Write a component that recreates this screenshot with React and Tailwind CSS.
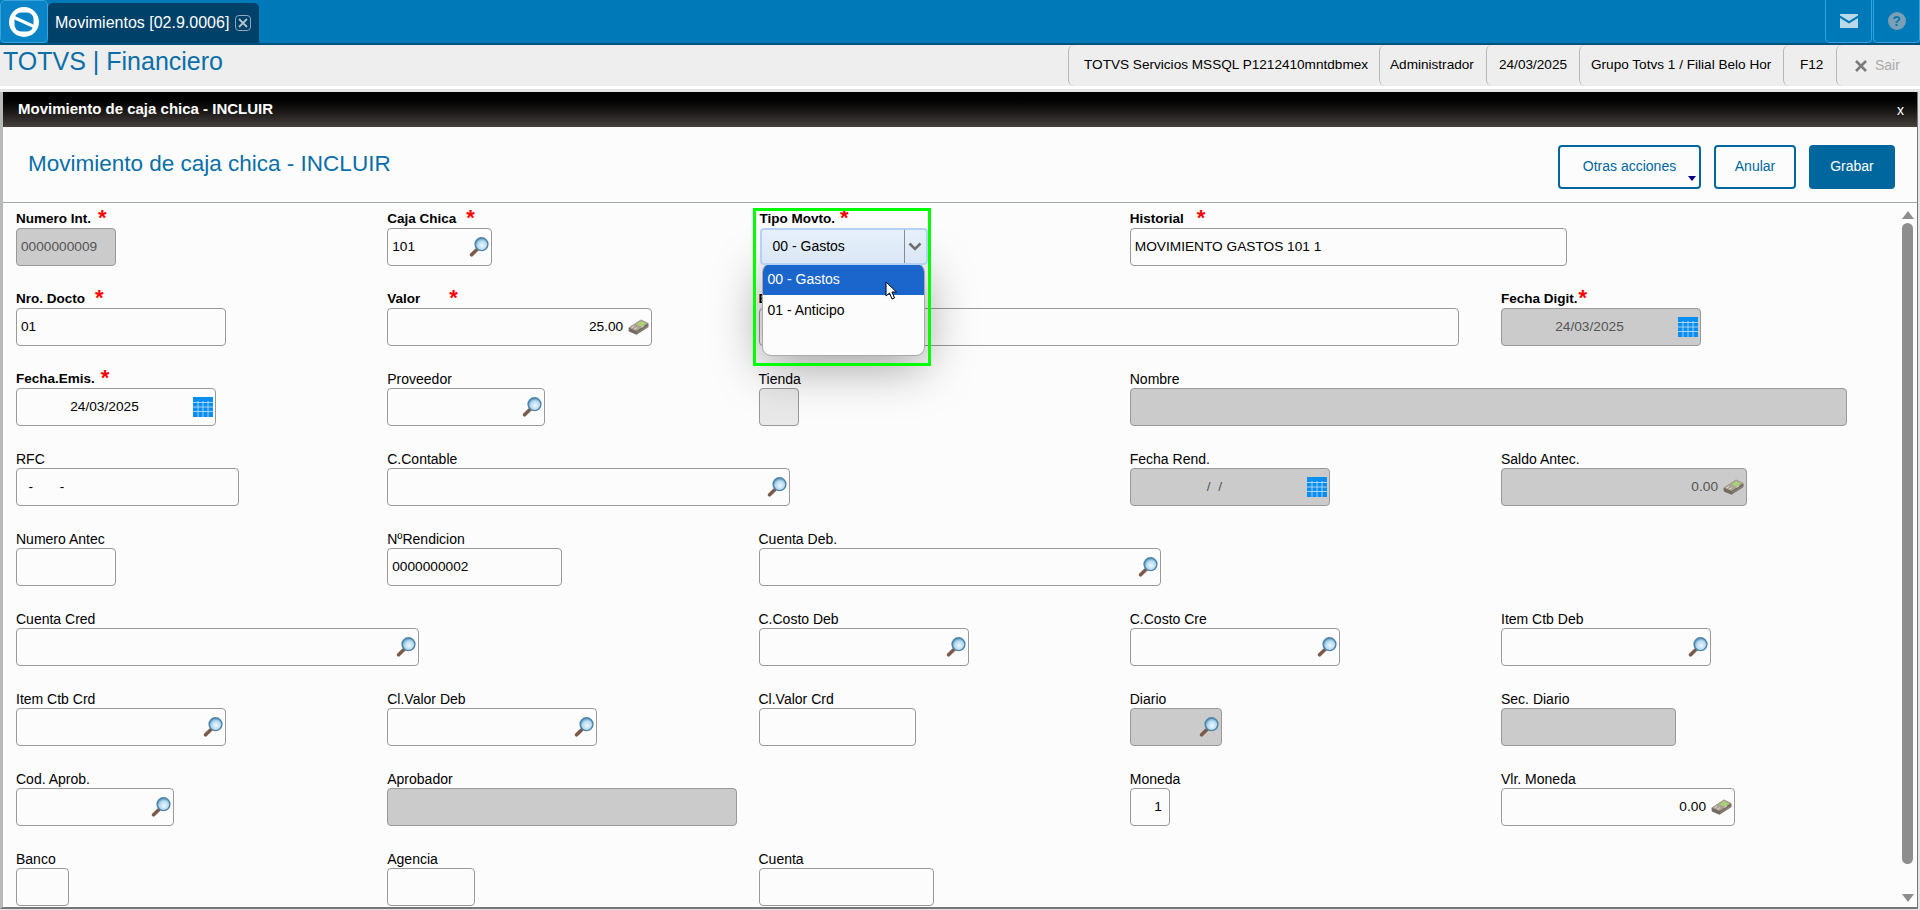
import React from "react";

const Lupa = () => (
  <svg width="20" height="20" viewBox="0 0 20 20" className="shrink-0">
    <defs>
      <radialGradient id="glass" cx="0.55" cy="0.6" r="0.6">
        <stop offset="0" stopColor="#eef8fd" />
        <stop offset="0.6" stopColor="#b4d9f0" />
        <stop offset="1" stopColor="#3f86b8" />
      </radialGradient>
    </defs>
    <path d="M7.5 13 L2.6 17.8" stroke="#7a5a4a" strokeWidth="3.6" strokeLinecap="round" />
    <circle cx="12.5" cy="7.2" r="6.4" fill="url(#glass)" stroke="#4f84a6" strokeWidth="1.4" />
  </svg>
);

const Calendario = () => (
  <svg width="20" height="20" viewBox="0 0 20 20" className="shrink-0">
    <rect width="20" height="20" fill="#0a8ef2" />
    <path d="M0 5.5H20M0 10H20M0 14.5H20M5 4V20M10 4V20M15 4V20" stroke="#cfe8fb" strokeOpacity="0.75" strokeWidth="1" />
  </svg>
);

const Dinheiro = () => (
  <svg width="21" height="16" viewBox="0 0 21 16" className="shrink-0">
    <path d="M0.5 9 L13 0.8 L20.5 4.5 L20.5 8 L8.5 15.8 L0.8 12.5 Z" fill="#746b60" />
    <path d="M0.5 8.6 L13 0.5 L20.5 4 L8.5 12 Z" fill="#aca396" />
    <path d="M8.5 5.2 L13.2 2.2 L18 4.4 L13.3 7.5 Z" fill="#a8d46f" />
    <path d="M3.5 9 L6 7.4 M6.2 10.4 L8.7 8.8 M13.6 8.4 L16 6.8" stroke="#e4ded3" strokeWidth="1" />
    <path d="M9 14 L20 7" stroke="#9a9084" strokeWidth="0.8" />
  </svg>
);

const icons = { lupa: <Lupa />, cal: <Calendario />, din: <Dinheiro /> };

// cada linha do formulario: col = coluna 1-5, req = margem do asterisco
const rows = [
  [
    { col: "col-start-1", label: "Numero Int.", req: "ml-[7px]", w: "w-[100px]", value: "0000000009", dis: true },
    { col: "col-start-2", label: "Caja Chica", req: "ml-[10px]", w: "w-[105px]", value: "101", icon: "lupa" },
    { col: "col-start-3", select: true },
    { col: "col-start-4", label: "Historial", req: "ml-[13px]", w: "w-[437px]", value: "MOVIMIENTO GASTOS 101 1" },
  ],
  [
    { col: "col-start-1", label: "Nro. Docto", req: "ml-[10px]", w: "w-[210px]", value: "01" },
    { col: "col-start-2", label: "Valor", req: "ml-[29px]", w: "w-[265px]", value: "25.00", icon: "din", right: true },
    { col: "col-start-3", label: "E", bold: true, w: "w-[700px]" },
    { col: "col-start-5", label: "Fecha Digit.", req: "ml-[1px]", w: "w-[200px]", value: "24/03/2025", icon: "cal", center: true, dis: true },
  ],
  [
    { col: "col-start-1", label: "Fecha.Emis.", req: "ml-[6px]", w: "w-[200px]", value: "24/03/2025", icon: "cal", center: true },
    { col: "col-start-2", label: "Proveedor", w: "w-[158px]", icon: "lupa" },
    { col: "col-start-3", label: "Tienda", w: "w-[40px]", dis: true, light: true },
    { col: "col-start-4", label: "Nombre", w: "w-[717px]", dis: true },
  ],
  [
    { col: "col-start-1", label: "RFC", w: "w-[223px]", value: "  -       -" },
    { col: "col-start-2", label: "C.Contable", w: "w-[403px]", icon: "lupa" },
    { col: "col-start-4", label: "Fecha Rend.", w: "w-[200px]", value: "/  /  ", icon: "cal", center: true, dis: true },
    { col: "col-start-5", label: "Saldo Antec.", w: "w-[246px]", value: "0.00", icon: "din", right: true, dis: true },
  ],
  [
    { col: "col-start-1", label: "Numero Antec", w: "w-[100px]" },
    { col: "col-start-2", label: "NºRendicion", w: "w-[175px]", value: "0000000002" },
    { col: "col-start-3", label: "Cuenta Deb.", w: "w-[402px]", icon: "lupa" },
  ],
  [
    { col: "col-start-1", label: "Cuenta Cred", w: "w-[403px]", icon: "lupa" },
    { col: "col-start-3", label: "C.Costo Deb", w: "w-[210px]", icon: "lupa" },
    { col: "col-start-4", label: "C.Costo Cre", w: "w-[210px]", icon: "lupa" },
    { col: "col-start-5", label: "Item Ctb Deb", w: "w-[210px]", icon: "lupa" },
  ],
  [
    { col: "col-start-1", label: "Item Ctb Crd", w: "w-[210px]", icon: "lupa" },
    { col: "col-start-2", label: "Cl.Valor Deb", w: "w-[210px]", icon: "lupa" },
    { col: "col-start-3", label: "Cl.Valor Crd", w: "w-[157px]" },
    { col: "col-start-4", label: "Diario", w: "w-[92px]", icon: "lupa", dis: true },
    { col: "col-start-5", label: "Sec. Diario", w: "w-[175px]", dis: true },
  ],
  [
    { col: "col-start-1", label: "Cod. Aprob.", w: "w-[158px]", icon: "lupa" },
    { col: "col-start-2", label: "Aprobador", w: "w-[350px]", dis: true },
    { col: "col-start-4", label: "Moneda", w: "w-[40px]", value: "1", right: true },
    { col: "col-start-5", label: "Vlr. Moneda", w: "w-[234px]", value: "0.00", icon: "din", right: true },
  ],
  [
    { col: "col-start-1", label: "Banco", w: "w-[53px]" },
    { col: "col-start-2", label: "Agencia", w: "w-[88px]" },
    { col: "col-start-3", label: "Cuenta", w: "w-[175px]" },
  ],
];

function Label({ text, req, bold }) {
  return (
    <div className="h-[24px] flex items-end pb-[1px] text-[14px] leading-[16px] text-black whitespace-nowrap">
      <span className={req || bold ? "font-bold text-[13.5px]" : ""}>{text}</span>
      {req && <span className={`${req} text-[#f00] font-bold text-[22px] leading-[14px] h-[14px] self-start mt-[7px]`}>*</span>}
    </div>
  );
}

function Field({ f }) {
  const bg = f.dis ? "bg-[#cbcbcb] text-[#555]" : "bg-[#fcfcfc] text-black";
  return (
    <div className={f.col}>
      <Label text={f.label} req={f.req} bold={f.bold} />
      <div className={`${f.w} ${f.light ? "bg-[#e8e8e8]" : bg} h-[38px] border border-[#999] rounded-[4px] flex items-center pl-[4px] pr-[2px] text-[13.7px]`}>
        <span className={`flex-1 min-w-0 whitespace-pre ${f.right ? "text-right pr-[5px]" : ""} ${f.center ? "text-center pr-[5px]" : ""}`}>{f.value}</span>
        {f.icon && icons[f.icon]}
      </div>
    </div>
  );
}

function TipoMovto() {
  return (
    <div className="col-start-3 relative">
      <div className="ml-[1px]">
        <Label text="Tipo Movto." req="ml-[5px]" />
      </div>
      <div className="relative z-30 ml-[1px] w-[168px] h-[37px] border-2 border-[#b5d2f5] rounded-[4px] bg-linear-to-b from-[#e6f0fb] to-[#dae7f6] flex items-center text-[14px] text-black">
        <span className="flex-1 pl-[11px]">00 - Gastos</span>
        <div className="w-[22px] h-full border-l border-[#8a8a8a] flex items-center justify-center">
          <svg width="14" height="9" viewBox="0 0 14 9">
            <path d="M1.5 1.5 L7 7 L12.5 1.5" fill="none" stroke="#6f6f6f" strokeWidth="2.6" />
          </svg>
        </div>
      </div>
      {/* lista aberta do select */}
      <div className="absolute z-20 left-[3px] top-[59px] w-[163px] h-[93px] rounded-[9px] bg-[#fcfcfc] border border-[#aaa] overflow-hidden text-[14px] shadow-[0_10px_50px_rgba(0,0,0,0.38)]">
        <div className="h-[31px] bg-[#1b66cc] text-white pl-[5px] flex items-center">00 - Gastos</div>
        <div className="h-[30px] text-black pl-[5px] flex items-center">01 - Anticipo</div>
      </div>
      <div className="absolute z-30 left-[-6px] top-[4px] w-[178px] h-[158px] border-[3px] border-[#00ff00] pointer-events-none" />
      <svg width="13" height="20" viewBox="0 0 13 20" className="absolute z-40 left-[126px] top-[77px]">
        <path d="M1 1 V15 L4.5 12 L7 18 L9.5 17 L7 11 H11.5 Z" fill="#fff" stroke="#000" strokeWidth="1" />
      </svg>
    </div>
  );
}

const statusCells = [
  { w: "w-[311px]", pad: "pl-[15px]", text: "TOTVS Servicios MSSQL P1212410mntdbmex" },
  { w: "w-[107px]", pad: "pl-[10px]", text: "Administrador" },
  { w: "w-[93px]", pad: "pl-[12px]", text: "24/03/2025" },
  { w: "w-[204px]", pad: "pl-[11px]", text: "Grupo Totvs 1 / Filial Belo Hor" },
  { w: "w-[53px]", pad: "pl-[16px]", text: "F12" },
];

export default function App() {
  return (
    <div className="h-[910px] w-[1920px] overflow-hidden flex flex-col bg-[#e4e4e4] font-['Liberation_Sans',Arial,sans-serif]">
      {/* barra azul */}
      <div className="h-[45px] shrink-0 bg-[#0079b8] border-b-2 border-[#00507c] flex items-stretch">
        <div className="w-[48px] bg-[#0a84c6] border border-[#35a3e0] rounded-[5px] flex items-center justify-center">
          <svg width="32" height="32" viewBox="0 0 32 32">
            <circle cx="16" cy="16" r="15" fill="#fff" />
            <rect x="6.5" y="6.5" width="19" height="19" rx="6.5" fill="#0a84c6" />
            <path d="M5 11 L27 21" stroke="#fff" strokeWidth="3.2" />
          </svg>
        </div>
        <div className="mt-[3px] w-[211px] bg-[#004169] rounded-t-[5px] flex items-center pl-[7px] gap-[6px] text-white text-[16px]">
          <span className="whitespace-nowrap">Movimientos [02.9.0006]</span>
          <span className="w-[16px] h-[16px] border border-[#8fa9b8] rounded-[4px] flex items-center justify-center">
            <svg width="10" height="10" viewBox="0 0 10 10">
              <path d="M1 1 L9 9 M9 1 L1 9" stroke="#b5c5cf" strokeWidth="1.8" />
            </svg>
          </span>
        </div>
        <div className="flex-1" />
        <div className="w-[47px] border border-t-0 border-[#35a3e0] rounded-b-[5px] flex items-center justify-center">
          <svg width="18" height="14" viewBox="0 0 18 14">
            <path d="M0 0 H18 V1.5 L9 7 L0 1.5 Z M0 4 L9 9.5 L18 4 V14 H0 Z" fill="#b9d8e8" />
          </svg>
        </div>
        <div className="w-[47px] ml-[1px] border border-t-0 border-[#35a3e0] rounded-b-[5px] flex items-center justify-center">
          <span className="w-[18px] h-[18px] rounded-full bg-[#7d9fb3] text-[#0079b8] text-[14px] font-bold leading-none flex items-center justify-center">?</span>
        </div>
      </div>

      {/* barra de status */}
      <div className="h-[41px] shrink-0 bg-[#eeeeee] flex items-stretch text-[13.6px] text-black">
        <div className="flex-1 pl-[3px] pt-[2px] text-[25px] leading-[28px] text-[#0a6fa8] whitespace-nowrap">TOTVS | Financiero</div>
        {statusCells.map((c) => (
          <div key={c.text} className={`${c.w} ${c.pad} border-l border-[#b8b8b8] rounded-l-[6px] flex items-center whitespace-nowrap`}>
            {c.text}
          </div>
        ))}
        <div className="w-[84px] border-l border-[#b8b8b8] rounded-l-[6px] flex items-center pl-[18px] gap-[8px] text-[#aaa] text-[14px]">
          <svg width="12" height="12" viewBox="0 0 12 12">
            <path d="M1 1 L11 11 M11 1 L1 11" stroke="#7b7b7b" strokeWidth="2.6" />
          </svg>
          Sair
        </div>
      </div>

      <div className="h-[3px] shrink-0 bg-white" />

      {/* janela do dialogo */}
      <div className="flex-1 min-h-0 mt-[3px] mr-[2px] mb-[1px] border-l-[3px] border-l-[#b9b9b9] border-r border-r-[#777] border-b-2 border-b-[#777] bg-[#fcfcfc] flex flex-col">
        <div className="h-[35px] shrink-0 bg-linear-to-b from-[#000000] to-[#474240] flex items-center justify-between pl-[15px] pr-[13px] text-white">
          <span className="text-[15px] font-bold">Movimiento de caja chica - INCLUIR</span>
          <span className="text-[14px] leading-none">x</span>
        </div>
        <div className="h-[76px] shrink-0 border-b border-[#a0aaa8] flex items-center justify-between pl-[25px] pr-[22px]">
          <span className="text-[22.5px] text-[#0a6fa8] -mt-[2px]">Movimiento de caja chica - INCLUIR</span>
          <div className="flex gap-[13px] text-[14px] mt-[4px]">
            <div className="relative w-[143px] h-[44px] border-2 border-[#00679e] rounded-[4px] flex items-center justify-center text-[#00679e] pb-[1px]">
              Otras acciones
              <span className="absolute right-[3px] bottom-[6px] border-x-[4px] border-x-transparent border-t-[5px] border-t-[#000088]" />
            </div>
            <div className="w-[82px] h-[44px] border-2 border-[#00679e] rounded-[4px] flex items-center justify-center text-[#00679e]">Anular</div>
            <div className="w-[86px] h-[44px] bg-[#00679e] rounded-[4px] flex items-center justify-center text-white">Grabar</div>
          </div>
        </div>
        <div className="flex-1 min-h-0 flex">
          <div className="flex-1 min-w-0 pl-[13px] overflow-hidden">
            <div className="grid grid-cols-[repeat(5,371.25px)] auto-rows-[80px] pt-px">
              {rows.flat().map((f, i) =>
                f.select ? <TipoMovto key={i} /> : <Field key={i} f={f} />
              )}
            </div>
          </div>
          <div className="w-[15px] mr-[2px] shrink-0 flex flex-col items-center pt-[8px] pb-[5px]">
            <span className="border-x-[6px] border-x-transparent border-b-[8px] border-b-[#8e8e8e]" />
            <div className="mt-[4px] w-[11px] flex-1 rounded-full bg-[#8e8e8e]" />
            <span className="mt-[30px] border-x-[6px] border-x-transparent border-t-[8px] border-t-[#8e8e8e]" />
          </div>
        </div>
      </div>
    </div>
  );
}
